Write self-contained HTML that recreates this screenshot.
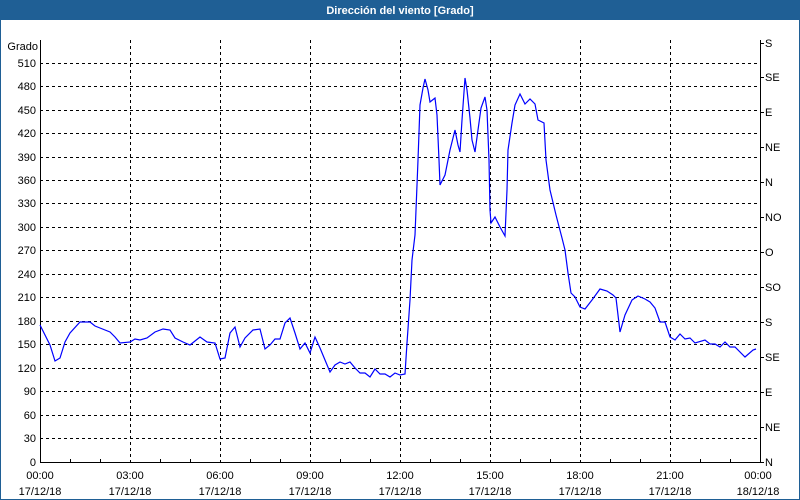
<!DOCTYPE html>
<html><head><meta charset="utf-8"><style>
html,body{margin:0;padding:0;width:800px;height:500px;overflow:hidden;background:#fff}
svg{display:block}
text{font-family:"Liberation Sans",sans-serif;font-size:11px;fill:#000}
</style></head><body>
<svg width="800" height="500" viewBox="0 0 800 500">
<rect x="0" y="0" width="800" height="500" fill="#fff"/>
<rect x="0.5" y="0.5" width="799" height="499" fill="none" stroke="#1f5f95"/>
<rect x="0" y="0" width="800" height="20" fill="#1f5f95"/>
<text x="400" y="14" text-anchor="middle" style="fill:#fff;font-weight:bold">Dirección del viento [Grado]</text>
<g stroke="#000" stroke-dasharray="3,3" stroke-width="1">
<path d="M40 63.5H760M40 86.5H760M40 110.5H760M40 133.5H760M40 157.5H760M40 180.5H760M40 203.5H760M40 227.5H760M40 250.5H760M40 274.5H760M40 297.5H760M40 321.5H760M40 344.5H760M40 368.5H760M40 391.5H760M40 415.5H760M40 438.5H760"/>
<path d="M130.5 40V462M220.5 40V462M310.5 40V462M400.5 40V462M490.5 40V462M580.5 40V462M670.5 40V462"/>
</g>
<g stroke="#000" stroke-width="1" fill="none">
<path d="M40.5 40V462.5H760.5V40"/>
<path d="M70.5 459V462M100.5 459V462M160.5 459V462M190.5 459V462M250.5 459V462M280.5 459V462M340.5 459V462M370.5 459V462M430.5 459V462M460.5 459V462M520.5 459V462M550.5 459V462M610.5 459V462M640.5 459V462M700.5 459V462M730.5 459V462"/>
<path d="M760 43.5h4M760 77.5h4M760 112.5h4M760 147.5h4M760 182.5h4M760 217.5h4M760 252.5h4M760 287.5h4M760 322.5h4M760 357.5h4M760 392.5h4M760 427.5h4M760 462.5h4"/>
</g>
<g text-anchor="end">
<text x="38" y="50">Grado</text>
<text x="36" y="67">510</text><text x="36" y="90">480</text><text x="36" y="114">450</text><text x="36" y="137">420</text><text x="36" y="161">390</text><text x="36" y="184">360</text><text x="36" y="207">330</text><text x="36" y="231">300</text><text x="36" y="254">270</text><text x="36" y="278">240</text><text x="36" y="301">210</text><text x="36" y="325">180</text><text x="36" y="348">150</text><text x="36" y="372">120</text><text x="36" y="395">90</text><text x="36" y="419">60</text><text x="36" y="442">30</text><text x="36" y="466">0</text>
</g>
<g>
<text x="765" y="47">S</text><text x="765" y="81">SE</text><text x="765" y="116">E</text><text x="765" y="151">NE</text><text x="765" y="186">N</text><text x="765" y="221">NO</text><text x="765" y="256">O</text><text x="765" y="291">SO</text><text x="765" y="326">S</text><text x="765" y="361">SE</text><text x="765" y="396">E</text><text x="765" y="431">NE</text><text x="765" y="466">N</text>
</g>
<g text-anchor="middle">
<text x="40" y="479">00:00</text><text x="40" y="495">17/12/18</text>
<text x="130" y="479">03:00</text><text x="130" y="495">17/12/18</text>
<text x="220" y="479">06:00</text><text x="220" y="495">17/12/18</text>
<text x="310" y="479">09:00</text><text x="310" y="495">17/12/18</text>
<text x="400" y="479">12:00</text><text x="400" y="495">17/12/18</text>
<text x="490" y="479">15:00</text><text x="490" y="495">17/12/18</text>
<text x="580" y="479">18:00</text><text x="580" y="495">17/12/18</text>
<text x="670" y="479">21:00</text><text x="670" y="495">17/12/18</text>
<text x="758" y="479">00:00</text><text x="758" y="495">18/12/18</text>
</g>
<polyline fill="none" stroke="#0000ff" stroke-width="1.2" points="40,325 45,335 50,345 55,361 60,358 65,342 70,333 80,322 90,322 95,326 100,328 110,332 115,337 120,343 130,342 135,339 140,340 147,338 155,332 163,329 170,330 175,338 183,342 190,345 200,337 207,342 215,343 220,359 225,358 230,333 235,327 240,347 245,338 253,330 260,329 265,349 270,345 275,339 280,339 285,323 290,318 295,333 300,349 305,343 310,353 315,337 320,348 330,372 335,365 340,362 345,364 350,362 355,368 360,373 365,373 370,377 375,369 380,374 385,374 390,377 395,373 400,375 405,374 407,343 410,300 412,260 415,235 418,160 420,105 423,88 425,79 428,90 430,102 435,98 437,115 439,160 440,185 445,175 450,150 455,130 458,145 460,152 462,120 465,78 467,90 470,118 472,140 475,152 478,130 481,108 485,97 487,110 489,160 490,210 491,223 495,217 500,227 505,236 507,190 508,150 512,123 515,105 520,94 525,104 530,99 535,104 538,120 544,123 546,160 550,190 556,215 562,238 565,250 568,273 571,293 575,297 580,307 585,309 592,300 600,289 607,291 613,295 616,298 620,332 625,315 632,300 638,296 645,299 650,302 655,308 660,322 665,322 670,337 675,340 680,334 685,339 690,338 695,343 705,340 710,344 715,344 720,347 725,342 730,347 735,347 745,357 753,350 756,349"/>
</svg>
</body></html>
